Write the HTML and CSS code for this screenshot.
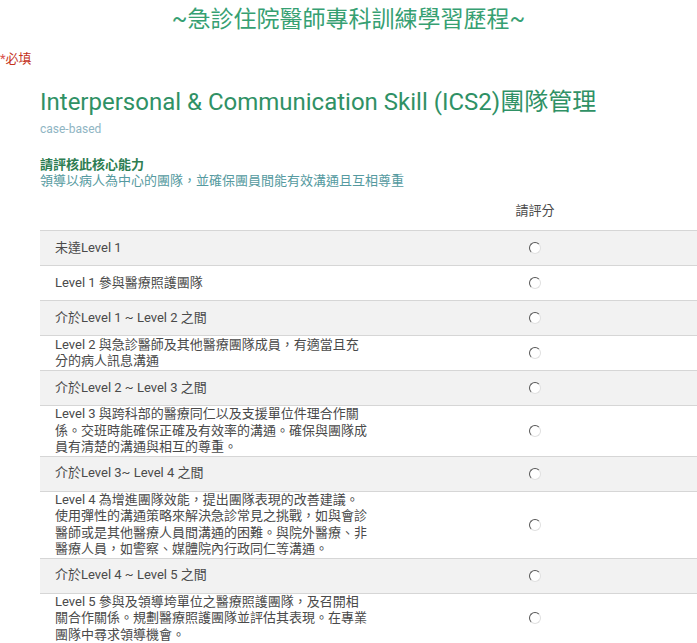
FILE: index.html
```html
<!DOCTYPE html>
<html lang="zh-Hant">

<head>
    <meta charset="UTF-8">
    <meta name="viewport" content="width=device-width, initial-scale=1.0">
    <title>急診住院醫師專科訓練學習歷程</title>
    <link rel="stylesheet" href="styles.css">
</head>

<body>
    <h1 class="form-title">~急診住院醫師專科訓練學習歷程~</h1>

    <div class="required-note"><span class="star">*</span>必填</div>

    <form class="form-body">
        <h2 class="section-title">Interpersonal &amp; Communication Skill (ICS2)團隊管理</h2>
        <div class="section-desc">case-based</div>

        <div class="question">
            <div class="question-title">請評核此核心能力</div>
            <div class="question-help">領導以病人為中心的團隊，並確保團員間能有效溝通且互相尊重</div>

            <div class="grid">
                <div class="grid-head">
                    <div></div>
                    <div class="col-label">請評分</div>
                </div>

                <label class="grid-row shaded">
                    <span class="row-label">未達Level 1</span>
                    <span class="cell"><input type="radio" name="ics2" value="0"></span>
                </label>
                <label class="grid-row">
                    <span class="row-label">Level 1 參與醫療照護團隊</span>
                    <span class="cell"><input type="radio" name="ics2" value="1"></span>
                </label>
                <label class="grid-row shaded">
                    <span class="row-label">介於Level 1 ~ Level 2 之間</span>
                    <span class="cell"><input type="radio" name="ics2" value="1.5"></span>
                </label>
                <label class="grid-row">
                    <span class="row-label">Level 2 與急診醫師及其他醫療團隊成員，有適當且充<br>分的病人訊息溝通</span>
                    <span class="cell"><input type="radio" name="ics2" value="2"></span>
                </label>
                <label class="grid-row shaded">
                    <span class="row-label">介於Level 2 ~ Level 3 之間</span>
                    <span class="cell"><input type="radio" name="ics2" value="2.5"></span>
                </label>
                <label class="grid-row">
                    <span class="row-label">Level 3 與跨科部的醫療同仁以及支援單位件理合作關<br>係。交班時能確保正確及有效率的溝通。確保與團隊成<br>員有清楚的溝通與相互的尊重。</span>
                    <span class="cell"><input type="radio" name="ics2" value="3"></span>
                </label>
                <label class="grid-row shaded">
                    <span class="row-label">介於Level 3~ Level 4 之間</span>
                    <span class="cell"><input type="radio" name="ics2" value="3.5"></span>
                </label>
                <label class="grid-row">
                    <span class="row-label">Level 4 為增進團隊效能，提出團隊表現的改善建議。<br>使用彈性的溝通策略來解決急診常見之挑戰，如與會診<br>醫師或是其他醫療人員間溝通的困難。與院外醫療、非<br>醫療人員，如警察、媒體院內行政同仁等溝通。</span>
                    <span class="cell"><input type="radio" name="ics2" value="4"></span>
                </label>
                <label class="grid-row shaded">
                    <span class="row-label">介於Level 4 ~ Level 5 之間</span>
                    <span class="cell"><input type="radio" name="ics2" value="4.5"></span>
                </label>
                <label class="grid-row">
                    <span class="row-label">Level 5 參與及領導垮單位之醫療照護團隊，及召開相<br>關合作關係。規劃醫療照護團隊並評估其表現。在專業<br>團隊中尋求領導機會。</span>
                    <span class="cell"><input type="radio" name="ics2" value="5"></span>
                </label>
            </div>
        </div>
    </form>
</body>

</html>
```

FILE: styles.css
```css
* {
    box-sizing: border-box;
}

html {
    overflow: hidden;
}

body {
    margin: 0;
    background-color: #fff;
    color: #4a4a4a;
    font-family: Roboto, 'Noto Sans CJK TC', sans-serif;
    font-size: 13px;
}

.form-title {
    margin: 6px 0 0;
    text-align: center;
    font-size: 23px;
    font-weight: normal;
    line-height: 28px;
    color: #36a072;
}

.required-note {
    margin-top: 17px;
    font-size: 13px;
    line-height: 16px;
    color: #c4321a;
}

.required-note .star {
    color: #d9534f;
}

.form-body {
    padding-left: 40px;
    margin-top: 20px;
}

.section-title {
    margin: 0;
    font-size: 24px;
    font-weight: normal;
    line-height: 30px;
    color: #2f9165;
}

.section-desc {
    margin-top: 4px;
    font-size: 12px;
    line-height: 16px;
    color: #8fb5c3;
}

.question {
    margin-top: 20px;
}

.question-title {
    font-weight: bold;
    line-height: 16px;
    color: #2d7d52;
}

.question-help {
    line-height: 16px;
    color: #559aa0;
}

.grid {
    width: 660px;
    margin-top: 9px;
}

.grid-head,
.grid-row {
    display: grid;
    grid-template-columns: 330px 330px;
    align-items: center;
}

.grid-head {
    height: 22px;
    margin-bottom: 10px;
}

.col-label {
    text-align: center;
    color: #4a4a4a;
}

.grid-row {
    min-height: 35px;
    border-top: 1px solid #d6d6d6;
    cursor: pointer;
}

.grid-row.shaded {
    background-color: #f2f2f2;
}

.row-label {
    padding: 0 15px;
    line-height: 16.5px;
    white-space: nowrap;
}

.cell {
    display: flex;
    justify-content: center;
}

.cell input {
    -webkit-appearance: none;
    appearance: none;
    width: 12px;
    height: 12px;
    margin: 0 0 0 -1px;
    border-radius: 50%;
    border: 1px solid;
    border-color: #555 #e0e0e0 #e0e0e0 #555;
    background-color: #fff;
    cursor: pointer;
}

.cell input:checked {
    background: radial-gradient(circle, #333 0 2px, #fff 2.5px);
}
```
